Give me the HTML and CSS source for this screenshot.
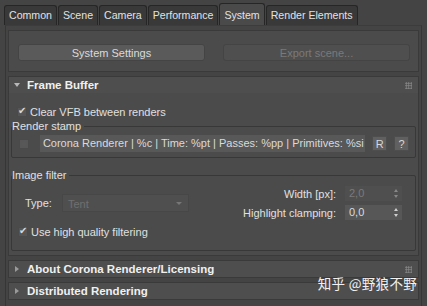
FILE: index.html
```html
<!DOCTYPE html>
<html lang="en">
<head>
  <meta charset="UTF-8">
  <title>Render Setup - System</title>
  <link rel="stylesheet" href="styles.css">
</head>
<body>
  <!-- Tab strip -->
  <div class="tabs">
    <div class="tab">Common</div>
    <div class="tab">Scene</div>
    <div class="tab">Camera</div>
    <div class="tab">Performance</div>
    <div class="tab active">System</div>
    <div class="tab">Render Elements</div>
  </div>

  <!-- Tab page -->
  <div class="page">
    <!-- Top buttons -->
    <div class="rollout top">
      <div class="btn-row">
        <button class="btn">System Settings</button>
        <button class="btn" disabled>Export scene...</button>
      </div>
    </div>

    <!-- Frame Buffer -->
    <div class="rollout">
      <div class="roll-head">
        <span class="arrow down"></span>
        <span class="roll-title">Frame Buffer</span>
        <span class="grip"></span>
      </div>
      <div class="roll-body">
        <label class="check first"><span class="box on"></span>Clear VFB between renders</label>

        <div class="group stamp">
          <div class="group-label">Render stamp</div>
          <div class="stamp-row">
            <span class="box"></span>
            <div class="field">Corona Renderer | %c | Time: %pt | Passes: %pp | Primitives: %si</div>
            <button class="mini">R</button>
            <button class="mini">?</button>
          </div>
        </div>

        <div class="group filter">
          <div class="group-label">Image filter</div>
          <div class="filter-grid">
            <div class="type-row">
              <span class="lbl">Type:</span>
              <div class="select">Tent<span class="caret"></span></div>
            </div>
            <div class="spinners">
              <div class="spin-row">
                <span class="lbl">Width [px]:</span>
                <div class="spinner dim">2,0<span class="updown"></span></div>
              </div>
              <div class="spin-row">
                <span class="lbl">Highlight clamping:</span>
                <div class="spinner">0,0<span class="updown"></span></div>
              </div>
            </div>
          </div>
          <label class="check"><span class="box on"></span>Use high quality filtering</label>
        </div>
      </div>
    </div>

    <!-- Collapsed rollouts -->
    <div class="rollout closed">
      <div class="roll-head">
        <span class="arrow right"></span>
        <span class="roll-title">About Corona Renderer/Licensing</span>
        <span class="grip"></span>
      </div>
    </div>
    <div class="rollout closed">
      <div class="roll-head">
        <span class="arrow right"></span>
        <span class="roll-title">Distributed Rendering</span>
      </div>
    </div>
  </div>

  <div class="watermark">知乎 @野狼不野</div>
</body>
</html>
```

FILE: styles.css
```css
/* Reset */
* {
  margin: 0;
  padding: 0;
  box-sizing: border-box;
}

body {
  width: 427px;
  height: 306px;
  overflow: hidden;
  background: #444444;
  color: #dcdcdc;
  font-family: "Liberation Sans", Arial, sans-serif;
  font-size: 11px;
  position: relative;
}

/* Tabs */
.tabs {
  display: flex;
  padding: 5px 0 0 4px;
  height: 25px;
}

.tab {
  height: 20px;
  line-height: 19px;
  padding: 0 4px;
  margin-right: 1px;
  background: #393939;
  border: 1px solid #262626;
  border-bottom: none;
  border-radius: 3px 3px 0 0;
  color: #e2e2e2;
  font-size: 10.6px;
}

.tab.active {
  background: #4a4a4a;
  height: 22px;
  margin-top: -2px;
  line-height: 23px;
}

/* Page */
.page {
  margin: 0 5px;
  height: 281px;
  border-left: 1px solid #363636;
  border-right: 1px solid #363636;
  border-top: 1px solid #3c3c3c;
  padding: 4px 2px 0;
}

.rollout {
  background: #4b4b4b;
  border: 1px solid #3a3a3a;
  margin-bottom: 4px;
}

.rollout.top {
  height: 42px;
  padding: 13px 8px 0 9px;
}

.btn-row {
  display: flex;
  justify-content: space-between;
}

.btn {
  width: 187px;
  height: 17px;
  background: #5a5a5a;
  border: 1px solid #444;
  border-radius: 3px;
  color: #dadada;
  font-family: inherit;
  font-size: 11px;
}

.btn:disabled {
  background: #4f4f4f;
  color: #7a7a7a;
}

/* Rollout header */
.roll-head {
  display: flex;
  align-items: center;
  height: 16px;
  padding-left: 5px;
  background: #4e4e4e;
}

.roll-title {
  font-weight: bold;
  font-size: 11.5px;
  color: #f0f0f0;
  margin-left: 7px;
}

.arrow {
  width: 0;
  height: 0;
}

.arrow.down {
  border-left: 3px solid transparent;
  border-right: 3px solid transparent;
  border-top: 4px solid #b8b8b8;
}

.arrow.right {
  border-top: 3px solid transparent;
  border-bottom: 3px solid transparent;
  border-left: 4px solid #9a9a9a;
  margin-left: 1px;
  margin-right: 1px;
}

.grip {
  margin-left: auto;
  margin-right: 6px;
  width: 7px;
  height: 7px;
  background-image: radial-gradient(circle, #8a8a8a 0.8px, transparent 1px);
  background-size: 2.5px 2.5px;
}

.rollout.closed .roll-head {
  height: 16px;
}

/* Rollout body */
.roll-body {
  height: 162px;
  padding: 10px 2px 0 2px;
}

.check {
  display: flex;
  align-items: center;
  height: 14px;
  padding-left: 6px;
  color: #e0e0e0;
}

.check.first {
  margin-top: 2px;
}

.box {
  width: 10px;
  height: 10px;
  background: #555;
  border: 1px solid #4a4a4a;
  margin-right: 3px;
  position: relative;
}

.box.on::after {
  content: "\2714";
  position: absolute;
  left: 0;
  top: -3px;
  font-size: 10px;
  color: #d8d8d8;
}

/* Group boxes */
.group {
  position: relative;
  border: 1px solid #383838;
  border-radius: 2px;
}

.group-label {
  position: absolute;
  top: -7px;
  left: 0;
  padding-right: 3px;
  background: #4b4b4b;
  color: #e0e0e0;
  line-height: 12px;
}

.stamp {
  margin-top: 7px;
  height: 32px;
  padding: 8px 6px 0 7px;
}

.stamp-row {
  display: flex;
  align-items: center;
}

.stamp-row .box {
  margin-right: 11px;
  background: #575757;
}

.field {
  width: 330px;
  height: 17px;
  line-height: 17px;
  padding-left: 3px;
  background: #585858;
  color: #dadada;
  white-space: nowrap;
  overflow: hidden;
}

.mini {
  width: 15px;
  height: 15px;
  margin-left: 7px;
  background: #606060;
  border: 1px solid #4e4e4e;
  color: #d8d8d8;
  font-family: inherit;
  font-size: 11px;
}

.filter {
  margin-top: 17px;
  height: 76px;
  padding: 10px 0 0 0;
}

.filter-grid {
  display: flex;
  justify-content: space-between;
  align-items: center;
  padding-right: 13px;
}

.type-row {
  display: flex;
  align-items: center;
  padding-left: 13px;
}

.lbl {
  color: #e0e0e0;
}

.select {
  position: relative;
  width: 127px;
  height: 18px;
  line-height: 18px;
  margin-left: 10px;
  padding-left: 5px;
  background: #4f4f4f;
  border: 1px solid #474747;
  color: #707070;
}

.caret {
  position: absolute;
  right: 6px;
  top: 7px;
  border-left: 3px solid transparent;
  border-right: 3px solid transparent;
  border-top: 3px solid #777;
}

.spinners {
  display: flex;
  flex-direction: column;
  gap: 4px;
}

.spin-row {
  display: flex;
  justify-content: flex-end;
  align-items: center;
}

.spinner {
  position: relative;
  width: 57px;
  height: 15px;
  line-height: 15px;
  margin-left: 9px;
  padding-left: 4px;
  background: #575757;
  color: #dadada;
}

.spinner.dim {
  background: #4f4f4f;
  color: #7a7a7a;
}

.updown {
  position: absolute;
  right: 3px;
  top: 3px;
  width: 5px;
  height: 9px;
}

.updown::before,
.updown::after {
  content: "";
  position: absolute;
  left: 0;
  border-left: 2.5px solid transparent;
  border-right: 2.5px solid transparent;
}

.updown::before {
  top: 0;
  border-bottom: 3px solid #cfcfcf;
}

.updown::after {
  bottom: 0;
  border-top: 3px solid #cfcfcf;
}

.dim .updown::before {
  border-bottom-color: #888;
}

.dim .updown::after {
  border-top-color: #888;
}

.filter .check {
  margin-top: 5px;
}

/* Watermark */
.watermark {
  position: absolute;
  right: 10px;
  bottom: 13px;
  font-family: "Noto Sans CJK SC", sans-serif;
  font-size: 13.5px;
  color: #f2f2f2;
  letter-spacing: 0.3px;
}
```
